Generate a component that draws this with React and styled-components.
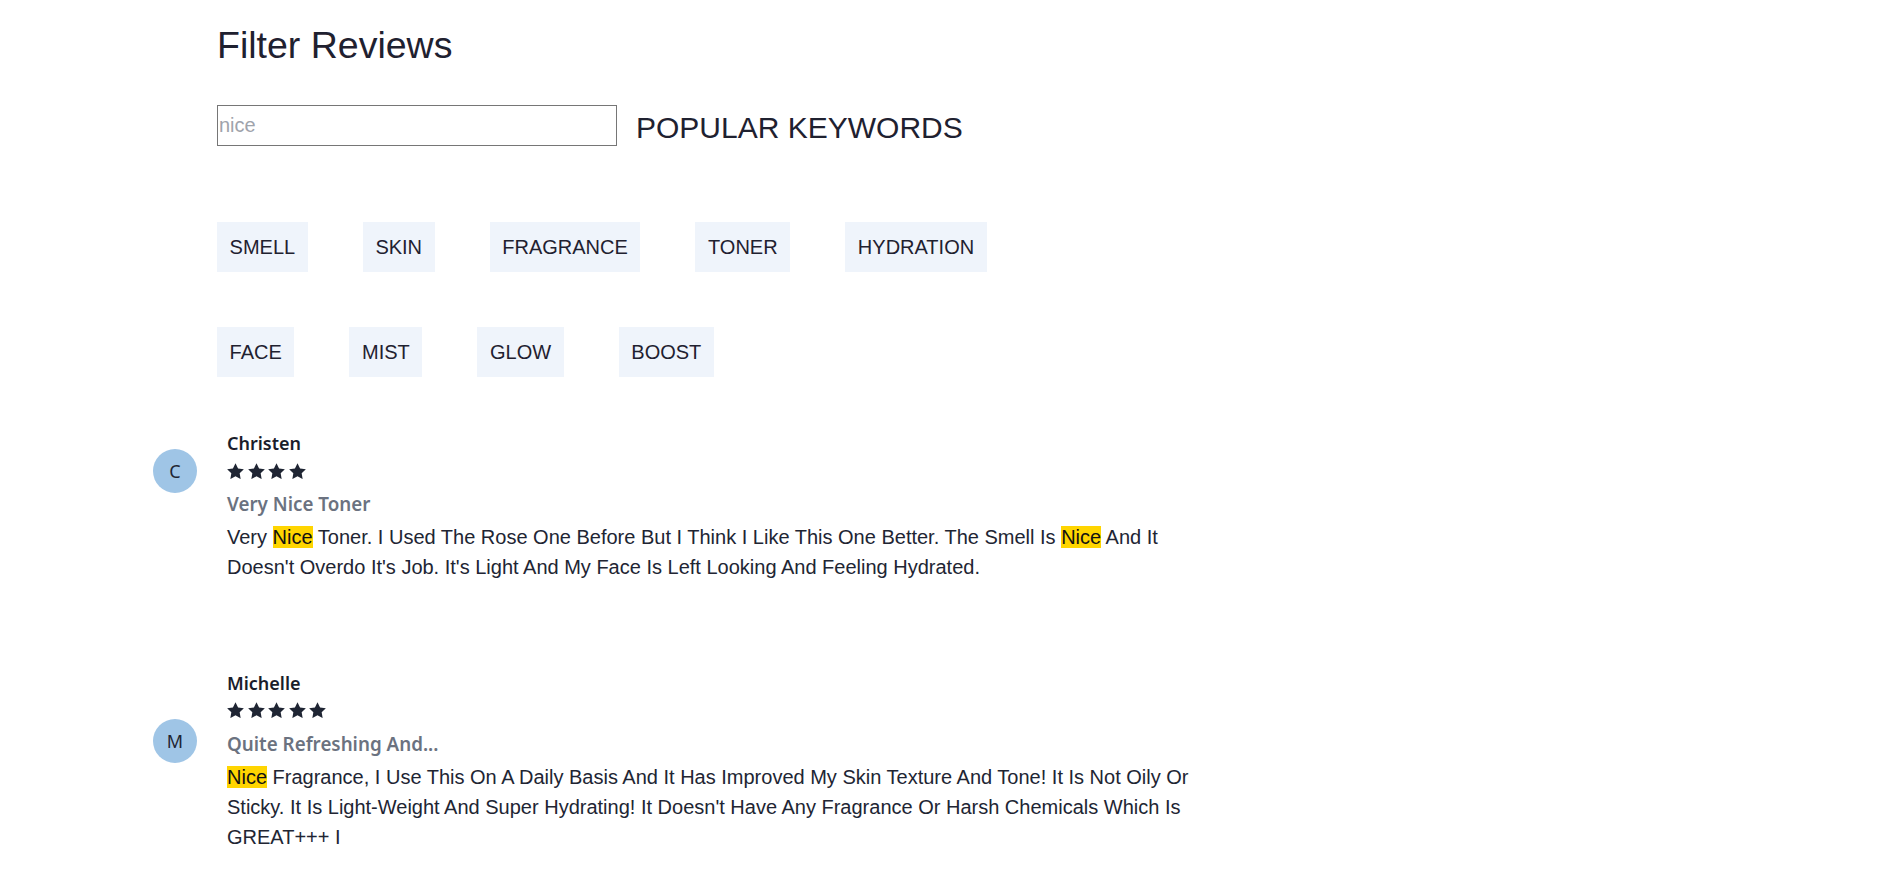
import React from "react";
import styled, { createGlobalStyle } from "styled-components";

const GlobalStyle = createGlobalStyle`
  html, body { margin: 0; padding: 0; background: #ffffff; }
  body { font-family: "Liberation Sans", Arial, sans-serif; color: #212529; }
  * { box-sizing: border-box; }
`;

const Page = styled.div`
  padding: 25px 0 40px 153px;
`;

const FilterSection = styled.section`
  margin-left: 64px;
`;

const Title = styled.h1`
  margin: 0;
  font-family: "Liberation Sans", Arial, sans-serif;
  font-size: 37.5px;
  line-height: 41px;
  font-weight: 400;
  color: #1f2130;
`;

const SearchRow = styled.div`
  display: flex;
  align-items: center;
  margin-top: 39px;
`;

const SearchInput = styled.input`
  width: 400px;
  height: 41px;
  padding: 0 1px;
  border: 1px solid #767676;
  border-radius: 0;
  font-family: "Liberation Sans", Arial, sans-serif;
  font-size: 20px;
  color: #212529;
  outline: none;
  &::placeholder { color: #9fa3ab; }
`;

const KeywordsHeading = styled.h2`
  margin: 3px 0 0 19px;
  font-family: "Liberation Sans", Arial, sans-serif;
  font-size: 30px;
  line-height: 35px;
  font-weight: 400;
  color: #1f2130;
`;

const ChipList = styled.div`
  display: flex;
  flex-wrap: wrap;
  column-gap: 55px;
  row-gap: 55px;
  max-width: 830px;
  margin-top: 76px;
`;

const Chip = styled.button`
  display: inline-flex;
  align-items: center;
  height: 50px;
  padding: 0 12.6px;
  border: none;
  background: #eff4fb;
  font-family: "Liberation Sans", Arial, sans-serif;
  font-size: 20px;
  color: #1f2130;
  cursor: pointer;
`;

const ReviewList = styled.div`
  display: flex;
  flex-direction: column;
  gap: 88.5px;
  margin-top: 54px;
`;

const Review = styled.article`
  display: flex;
  align-items: flex-end;
  gap: 30px;
`;

const Avatar = styled.div`
  flex: none;
  width: 44px;
  height: 44px;
  border-radius: 50%;
  background: #9fc5e6;
  display: flex;
  align-items: center;
  justify-content: center;
  margin-bottom: 89px;
  font-family: "Noto Sans", "Open Sans", sans-serif;
  font-size: 18px;
  color: #1f2533;
`;

const ReviewBody = styled.div`
  width: 990px;
`;

const Name = styled.div`
  font-family: "Noto Sans", "Open Sans", sans-serif;
  font-weight: 600;
  font-size: 18px;
  line-height: 24px;
  color: #1a1d2b;
`;

const Stars = styled.div`
  display: flex;
  gap: 3.5px;
  height: 17px;
  margin-top: 7px;
  align-items: center;
`;

const StarIcon = styled.svg`
  width: 17px;
  height: 16px;
  fill: #1f2533;
`;

const ReviewTitle = styled.div`
  margin-top: 13px;
  font-family: "Noto Sans", "Open Sans", sans-serif;
  font-weight: 600;
  font-size: 18.8px;
  line-height: 24px;
  color: #6b7280;
`;

const ReviewText = styled.p`
  margin: 6px 0 0;
  font-family: "Liberation Sans", Arial, sans-serif;
  font-size: 20px;
  line-height: 30px;
  color: #212533;
`;

const Highlight = styled.mark`
  background: #ffd500;
  color: #111;
`;

const Star = () => (
  <StarIcon viewBox="0 0 24 23">
    <path d="M12 0.3l3.7 7.5 8.3 1.2-6 5.8 1.4 8.3L12 19.2l-7.4 3.9L6 14.8 0 9l8.3-1.2z" />
  </StarIcon>
);

const keywords = ["SMELL", "SKIN", "FRAGRANCE", "TONER", "HYDRATION", "FACE", "MIST", "GLOW", "BOOST"];

const reviews = [
  {
    name: "Christen",
    initial: "C",
    stars: 4,
    title: "Very Nice Toner",
    parts: [
      "Very ",
      { hl: "Nice" },
      " Toner. I Used The Rose One Before But I Think I Like This One Better. The Smell Is ",
      { hl: "Nice" },
      " And It Doesn't Overdo It's Job. It's Light And My Face Is Left Looking And Feeling Hydrated.",
    ],
  },
  {
    name: "Michelle",
    initial: "M",
    stars: 5,
    title: "Quite Refreshing And...",
    parts: [
      { hl: "Nice" },
      " Fragrance, I Use This On A Daily Basis And It Has Improved My Skin Texture And Tone! It Is Not Oily Or Sticky. It Is Light-Weight And Super Hydrating! It Doesn't Have Any Fragrance Or Harsh Chemicals Which Is GREAT+++ I",
    ],
  },
];

export default function App() {
  return (
    <>
      <GlobalStyle />
      <Page>
        <FilterSection>
          <Title>Filter Reviews</Title>
          <SearchRow>
            <SearchInput type="text" placeholder="nice" />
            <KeywordsHeading>POPULAR KEYWORDS</KeywordsHeading>
          </SearchRow>
          <ChipList>
            {keywords.map((k) => (
              <Chip key={k}>{k}</Chip>
            ))}
          </ChipList>
        </FilterSection>
        <ReviewList>
          {reviews.map((r) => (
            <Review key={r.name}>
              <Avatar>{r.initial}</Avatar>
              <ReviewBody>
                <Name>{r.name}</Name>
                <Stars>
                  {Array.from({ length: r.stars }).map((_, i) => (
                    <Star key={i} />
                  ))}
                </Stars>
                <ReviewTitle>{r.title}</ReviewTitle>
                <ReviewText>
                  {r.parts.map((p, i) =>
                    typeof p === "string" ? <React.Fragment key={i}>{p}</React.Fragment> : <Highlight key={i}>{p.hl}</Highlight>
                  )}
                </ReviewText>
              </ReviewBody>
            </Review>
          ))}
        </ReviewList>
      </Page>
    </>
  );
}
